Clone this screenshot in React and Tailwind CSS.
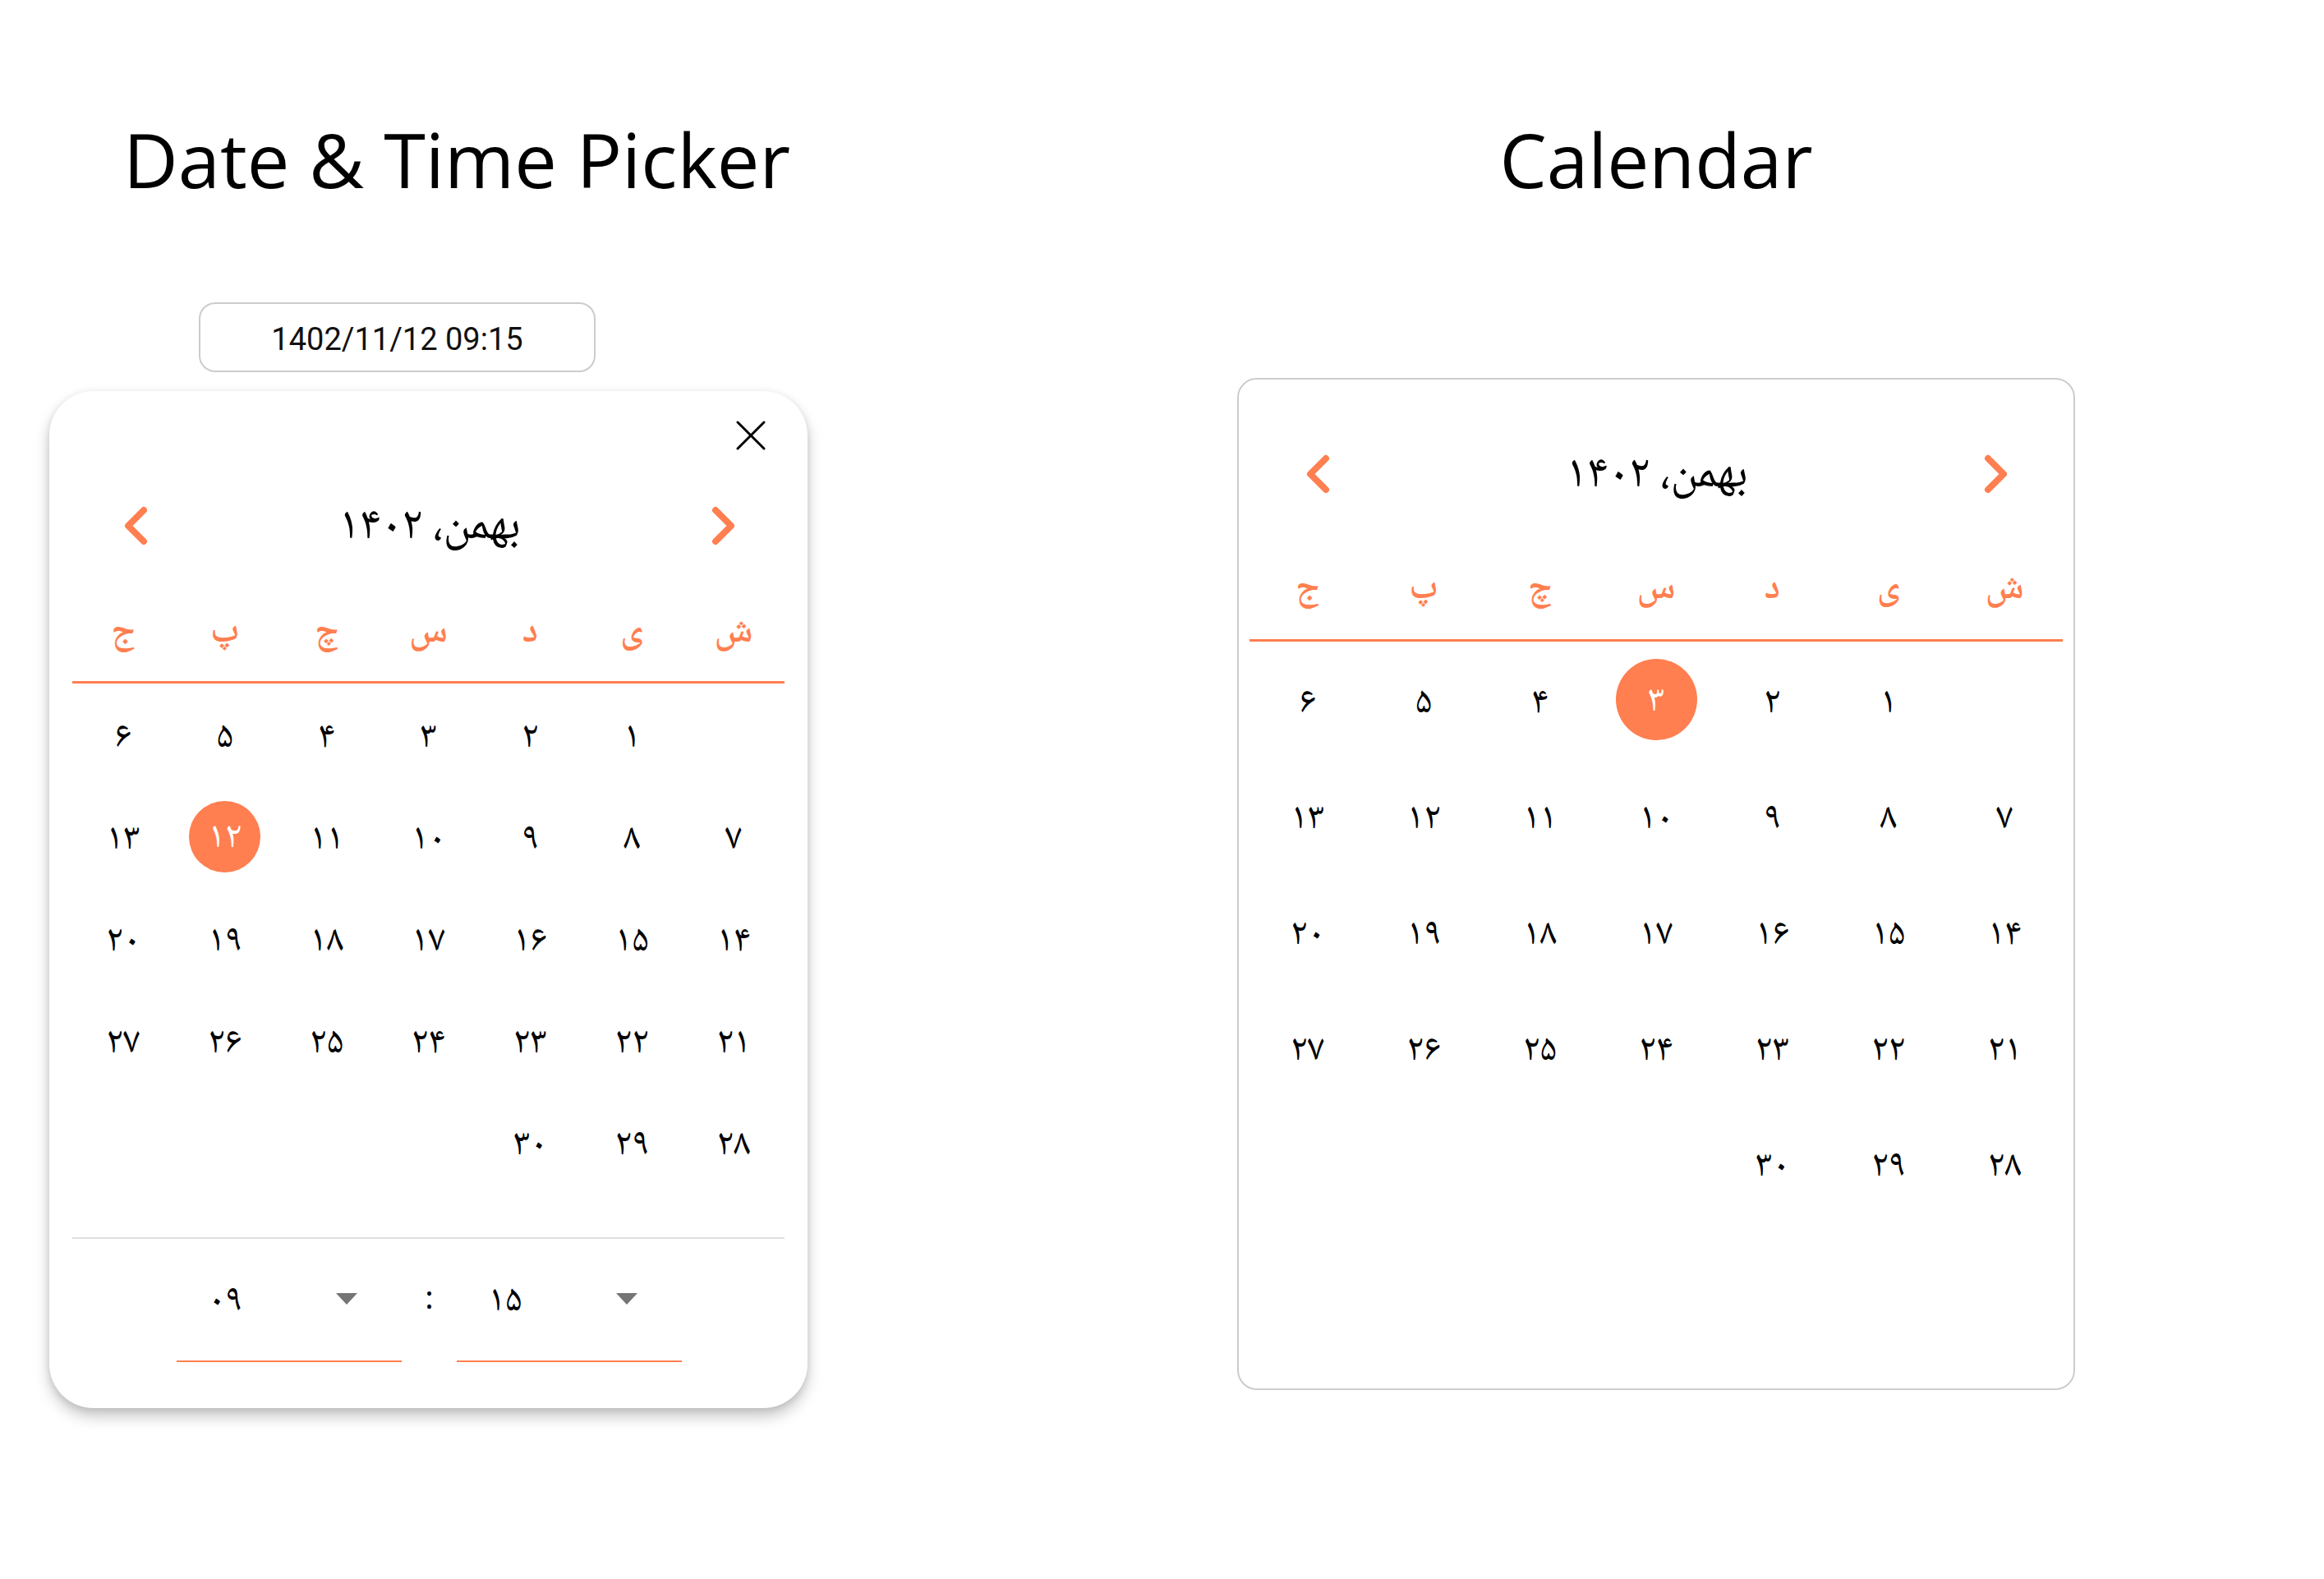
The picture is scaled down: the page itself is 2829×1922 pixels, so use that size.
import React from 'react';

const fa = (n) => String(n).replace(/\d/g, (d) => '۰۱۲۳۴۵۶۷۸۹'[d]);

const weekDays = ['ش', 'ی', 'د', 'س', 'چ', 'پ', 'ج'];
const days = [null, ...Array.from({ length: 30 }, (_, i) => i + 1)];
const rows = [];
for (let i = 0; i < days.length; i += 7) rows.push(days.slice(i, i + 7));

const persian = "font-['Noto_Naskh_Arabic','Noto_Sans_Arabic','DejaVu_Sans',sans-serif]";

const Chevron = ({ dir }) => (
  <svg width="30" height="48" viewBox="0 0 30 48" fill="none" stroke="#ff7f50" strokeWidth="8" strokeLinecap="round" strokeLinejoin="round">
    {dir === 'left' ? <polyline points="25,5 6,24 25,43" /> : <polyline points="5,5 24,24 5,43" />}
  </svg>
);

const CloseIcon = () => (
  <svg width="36" height="36" viewBox="0 0 36 36" stroke="#000" strokeWidth="3" strokeLinecap="round">
    <line x1="2" y1="2" x2="34" y2="34" />
    <line x1="34" y1="2" x2="2" y2="34" />
  </svg>
);

const Caret = () => (
  <svg width="26" height="14" viewBox="0 0 26 14">
    <polygon points="0,0 26,0 13,14" fill="#757575" />
  </svg>
);

const TimeSelect = ({ value }) => (
  <div className="w-[274px] h-[98px] pb-[54px] border-b-2 border-[#ff7f50] flex items-center justify-between pl-[29px] pr-[54px]">
    <span className="w-[60px] pt-[8px] text-center text-[46px] leading-none text-black">{value}</span>
    <Caret />
  </div>
);

export default function App() {
  return (
    <div className={`w-[2829px] h-[1922px] bg-white flex pt-[134px] text-black ${persian}`}>
      {/* Date & Time Picker */}
      <div className="w-[1100px] flex flex-col">
        <h1 className="ml-[150px] text-[92px] leading-[120px] font-['Open_Sans',sans-serif] font-normal">
          Date &amp; Time Picker
        </h1>

        <div className="ml-[242px] mt-[114px] w-[483px] h-[85px] pt-[6px] border-2 border-[#cccccc] rounded-[20px] flex items-center justify-center">
          <span className="font-['Roboto',sans-serif] text-[38px] text-[#111]">1402/11/12 09:15</span>
        </div>

        <div className="ml-[60px] mt-[23px] w-[923px] h-[1238px] bg-white rounded-[54px] shadow-[0_10px_18px_rgba(0,0,0,0.22),0_2px_8px_rgba(0,0,0,0.10)] flex flex-col">
          <div className="h-[108px] flex items-center justify-end pr-[51px]">
            <CloseIcon />
          </div>
          <div className="h-[112px] flex items-center justify-between pl-[90px] pr-[87px]">
            <Chevron dir="left" />
            <span dir="rtl" className="text-[57px] leading-none pt-[4px]">بهمن، ۱۴۰۲</span>
            <Chevron dir="right" />
          </div>

          <div className="px-[28px]">
            <div dir="rtl" className="grid grid-cols-7 h-[136px] pt-[18px] border-b-[3px] border-[#ff7f50] items-center">
              {weekDays.map((d) => (
                <div key={d} className="text-center text-[45px] leading-none font-semibold text-[#ff7f50]">{d}</div>
              ))}
            </div>
            {rows.map((row, ri) => (
              <div key={ri} dir="rtl" className="grid grid-cols-7">
                {row.map((d, ci) => (
                  <div key={ci} className="h-[124px] flex items-center justify-center text-[46px] leading-none">
                    {d === 12 ? (
                      <span className="w-[87px] h-[87px] pt-[6px] rounded-full bg-[#ff7f50] text-white flex items-center justify-center">{fa(d)}</span>
                    ) : d ? <span className="pt-[10px]">{fa(d)}</span> : ''}
                  </div>
                ))}
              </div>
            ))}
            <div className="mt-[54px] border-t-2 border-[#e0e0e0]"></div>
          </div>

          <div className="flex pl-[155px] pt-[52px]">
            <TimeSelect value="۰۹" />
            <div className="w-[67px] h-[44px] pt-[6px] flex items-center justify-center text-[38px] leading-none">:</div>
            <TimeSelect value="۱۵" />
          </div>
        </div>
      </div>

      {/* Calendar */}
      <div className="ml-[406px] w-[1020px] flex flex-col">
        <h1 className="text-center text-[91px] leading-[120px] font-['Open_Sans',sans-serif] font-normal">Calendar</h1>

        <div className="mt-[206px] w-[1020px] h-[1232px] border-2 border-[#cccccc] rounded-[24px] pt-[53px] px-[13px]">
          <div className="h-[124px] flex items-center justify-between pl-[68px] pr-[66px]">
            <Chevron dir="left" />
            <span dir="rtl" className="text-[57px] leading-none pt-[4px]">بهمن، ۱۴۰۲</span>
            <Chevron dir="right" />
          </div>
          <div dir="rtl" className="grid grid-cols-7 h-[142px] pt-[20px] border-b-[3px] border-[#ff7f50] items-center">
            {weekDays.map((d) => (
              <div key={d} className="text-center text-[45px] leading-none font-semibold text-[#ff7f50]">{d}</div>
            ))}
          </div>
          {rows.map((row, ri) => (
            <div key={ri} dir="rtl" className="grid grid-cols-7">
              {row.map((d, ci) => (
                <div key={ci} className="h-[141px] flex items-center justify-center text-[46px] leading-none">
                  {d === 3 ? (
                    <span className="w-[99px] h-[99px] pt-[6px] rounded-full bg-[#ff7f50] text-white flex items-center justify-center">{fa(d)}</span>
                  ) : d ? <span className="pt-[10px]">{fa(d)}</span> : ''}
                </div>
              ))}
            </div>
          ))}
        </div>
      </div>
    </div>
  );
}
